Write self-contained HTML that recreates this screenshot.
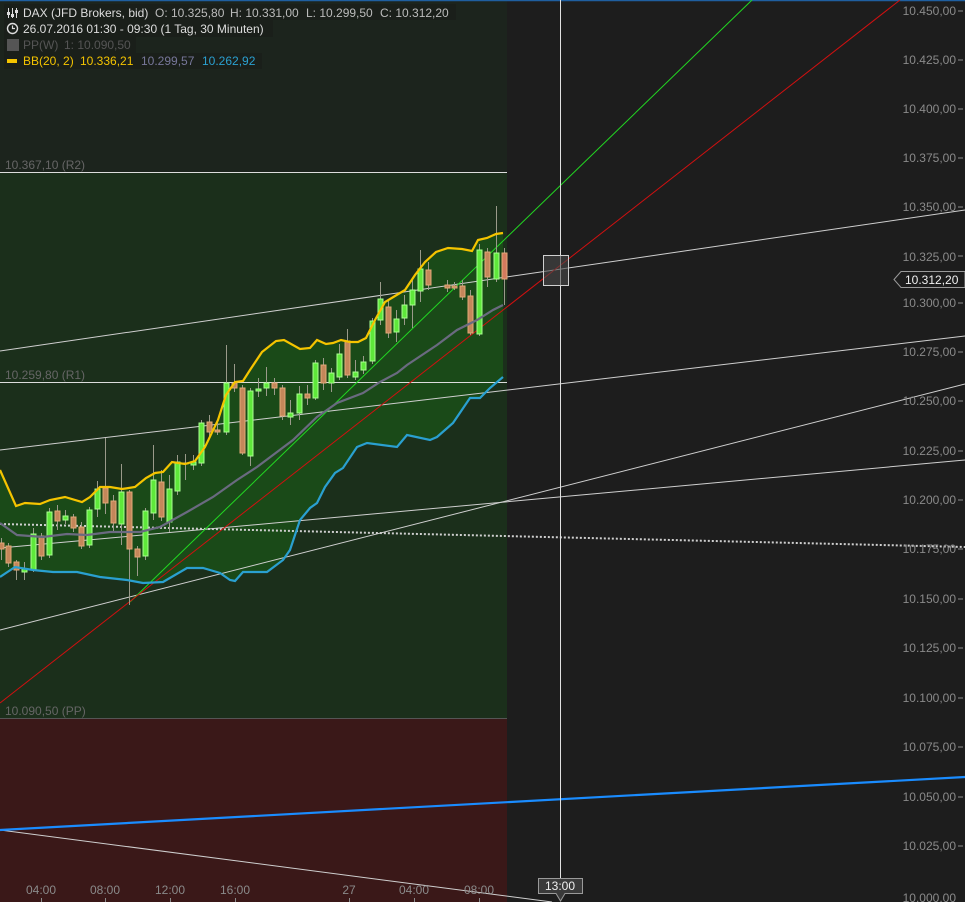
<!DOCTYPE html>
<html><head><meta charset="utf-8"><style>
html,body{margin:0;padding:0;background:#1d1d1d;}
svg{display:block;font-family:"Liberation Sans",sans-serif;}
text{white-space:pre;}
</style></head><body>
<svg width="965" height="902" xmlns="http://www.w3.org/2000/svg" xml:space="preserve">
<rect x="0" y="0" width="965" height="902" fill="#1d1d1d"/>
<rect x="0" y="0" width="507" height="172" fill="#1c241d"/>
<rect x="0" y="172" width="507" height="546" fill="#1b2f1b"/>
<rect x="0" y="718" width="507" height="184" fill="#3a1818"/>
<line x1="0" y1="0.5" x2="965" y2="0.5" stroke="#1f5fa0" stroke-width="1.5"/>
<polygon fill="#1a4a18" points="0,470 16,506 25,503 40,504 50,500 65,497 82,502 90,497 100,487 110,487 122,489 135,487 146,478 155,473 163,472 172,462 185,464 195,461 205,447 218,420 226,395 235,382 243,381 250,370 262,352 276,341 284,340 300,349 310,348 317,340 326,344 333,343 341,340 350,342 358,342 366,338 375,320 380,311 385,302 395,296 405,290 415,275 425,262 436,252 448,248 462,249 472,251 478,240 487,238 496,234 503,233 503,377 490,388 480,398 470,398 453,423 437,437 430,440 407,435 397,447 367,443 357,447 343,468 335,473 325,487 317,503 310,508 300,520 290,550 283,560 267,572 243,572 235,581 230,580 220,573 203,568 187,568 163,582 143,583 127,580 100,577 77,572 53,572 33,570 15,567 0,577"/>
<line x1="0" y1="172.5" x2="507" y2="172.5" stroke="#ddd" stroke-width="1"/>
<line x1="0" y1="382.5" x2="507" y2="382.5" stroke="#ddd" stroke-width="1"/>
<line x1="0" y1="718.5" x2="507" y2="718.5" stroke="#555" stroke-width="1"/>
<text x="5" y="169" font-size="12" fill="#666">10.367,10 (R2)</text>
<text x="5" y="379" font-size="12" fill="#666">10.259,80 (R1)</text>
<text x="5" y="715" font-size="12" fill="#666">10.090,50 (PP)</text>
<g stroke="#cfcfcf" stroke-width="1">
<line x1="0" y1="351" x2="965" y2="210"/>
<line x1="0" y1="450" x2="965" y2="336"/>
<line x1="0" y1="548" x2="965" y2="460"/>
<line x1="0" y1="630" x2="965" y2="384"/>
<line x1="0" y1="830" x2="552" y2="902"/>
</g>
<line x1="0" y1="524" x2="965" y2="547" stroke="#cfcfcf" stroke-width="2" stroke-dasharray="2,2"/>
<line x1="130" y1="602" x2="752" y2="0" stroke="#22d822" stroke-width="1"/>
<line x1="0" y1="703" x2="900" y2="0" stroke="#d01010" stroke-width="1"/>
<line x1="0" y1="830" x2="965" y2="777" stroke="#1a8cff" stroke-width="2.2"/>
<g stroke-width="1">
<g stroke="#9a9a8a">
<line x1="1.5" y1="538" x2="1.5" y2="560"/><line x1="8.5" y1="543" x2="8.5" y2="567"/><line x1="16.5" y1="560" x2="16.5" y2="580"/><line x1="24.5" y1="562" x2="24.5" y2="580"/><line x1="33.5" y1="528" x2="33.5" y2="572"/><line x1="41.5" y1="533" x2="41.5" y2="560"/><line x1="49.5" y1="508" x2="49.5" y2="558"/><line x1="57.5" y1="505" x2="57.5" y2="530"/><line x1="65.5" y1="510" x2="65.5" y2="524"/><line x1="73.5" y1="514" x2="73.5" y2="532"/><line x1="81.5" y1="522" x2="81.5" y2="549"/><line x1="89.5" y1="507" x2="89.5" y2="548"/><line x1="97.5" y1="481" x2="97.5" y2="517"/><line x1="105.5" y1="438" x2="105.5" y2="514"/><line x1="113.5" y1="495" x2="113.5" y2="532"/><line x1="121.5" y1="464" x2="121.5" y2="545"/><line x1="129.5" y1="490" x2="129.5" y2="605"/><line x1="137.5" y1="546" x2="137.5" y2="576"/><line x1="145.5" y1="508" x2="145.5" y2="560"/><line x1="153.5" y1="445" x2="153.5" y2="520"/><line x1="161.5" y1="470" x2="161.5" y2="521"/><line x1="169.5" y1="475" x2="169.5" y2="532"/><line x1="177.5" y1="455" x2="177.5" y2="495"/><line x1="185.5" y1="454" x2="185.5" y2="480"/><line x1="193.5" y1="455" x2="193.5" y2="470"/><line x1="201.5" y1="420" x2="201.5" y2="466"/><line x1="209.5" y1="415" x2="209.5" y2="437"/><line x1="217.5" y1="420" x2="217.5" y2="435"/><line x1="226.5" y1="345" x2="226.5" y2="435"/><line x1="234.5" y1="364" x2="234.5" y2="392"/><line x1="242.5" y1="385" x2="242.5" y2="455"/><line x1="250.5" y1="388" x2="250.5" y2="466"/><line x1="258.5" y1="378" x2="258.5" y2="397"/><line x1="266.5" y1="367" x2="266.5" y2="396"/><line x1="274.5" y1="378" x2="274.5" y2="395"/><line x1="282.5" y1="385" x2="282.5" y2="420"/><line x1="290.5" y1="400" x2="290.5" y2="425"/><line x1="299.5" y1="386" x2="299.5" y2="420"/><line x1="307.5" y1="385" x2="307.5" y2="405"/><line x1="315.5" y1="360" x2="315.5" y2="400"/><line x1="323.5" y1="358" x2="323.5" y2="390"/><line x1="331.5" y1="368" x2="331.5" y2="392"/><line x1="339.5" y1="344" x2="339.5" y2="380"/><line x1="347.5" y1="329" x2="347.5" y2="378"/><line x1="355.5" y1="360" x2="355.5" y2="380"/><line x1="363.5" y1="356" x2="363.5" y2="374"/><line x1="372.5" y1="318" x2="372.5" y2="364"/><line x1="380.5" y1="282" x2="380.5" y2="325"/><line x1="388.5" y1="300" x2="388.5" y2="338"/><line x1="396.5" y1="310" x2="396.5" y2="342"/><line x1="404.5" y1="295" x2="404.5" y2="325"/><line x1="412.5" y1="280" x2="412.5" y2="328"/><line x1="420.5" y1="250" x2="420.5" y2="302"/><line x1="428.5" y1="262" x2="428.5" y2="290"/><line x1="447.5" y1="280" x2="447.5" y2="292"/><line x1="454.5" y1="282" x2="454.5" y2="290"/><line x1="462.5" y1="280" x2="462.5" y2="300"/><line x1="470.5" y1="290" x2="470.5" y2="335"/><line x1="479.5" y1="244" x2="479.5" y2="336"/><line x1="487.5" y1="248" x2="487.5" y2="287"/><line x1="496.5" y1="206" x2="496.5" y2="282"/><line x1="504.5" y1="248" x2="504.5" y2="305"/>
</g>
<g fill="#c4875a" stroke="#e2a878">
<rect x="-1" y="543" width="5" height="6"/><rect x="6" y="546" width="5" height="17"/><rect x="14" y="562" width="5" height="8"/><rect x="39" y="536" width="5" height="20"/><rect x="55" y="511" width="5" height="10"/><rect x="71" y="517" width="5" height="11"/><rect x="79" y="527" width="5" height="19"/><rect x="103" y="488" width="5" height="15"/><rect x="111" y="501" width="5" height="22"/><rect x="127" y="492" width="5" height="57"/><rect x="135" y="549" width="5" height="8"/><rect x="159" y="482" width="5" height="35"/><rect x="183" y="463" width="5" height="1"/><rect x="207" y="422" width="5" height="10"/><rect x="215" y="430" width="5" height="2"/><rect x="232" y="383" width="5" height="5"/><rect x="240" y="388" width="5" height="65"/><rect x="272" y="383" width="5" height="5"/><rect x="280" y="388" width="5" height="28"/><rect x="305" y="394" width="5" height="4"/><rect x="321" y="365" width="5" height="18"/><rect x="345" y="341" width="5" height="34"/><rect x="386" y="307" width="5" height="26"/><rect x="426" y="270" width="5" height="15"/><rect x="445" y="285" width="5" height="3"/><rect x="452" y="286" width="5" height="2"/><rect x="460" y="286" width="5" height="11"/><rect x="468" y="296" width="5" height="37"/><rect x="485" y="252" width="5" height="25"/><rect x="502" y="253" width="5" height="26" fill="#d47a5e"/>
</g>
<g fill="#5ee83a" stroke="#a8ff90">
<rect x="22" y="569" width="5" height="3"/><rect x="31" y="534" width="5" height="36"/><rect x="47" y="512" width="5" height="43"/><rect x="63" y="516" width="5" height="4"/><rect x="87" y="510" width="5" height="35"/><rect x="95" y="489" width="5" height="20"/><rect x="119" y="492" width="5" height="32"/><rect x="143" y="511" width="5" height="45"/><rect x="151" y="480" width="5" height="33"/><rect x="167" y="489" width="5" height="33"/><rect x="175" y="462" width="5" height="29"/><rect x="191" y="462" width="5" height="3"/><rect x="199" y="423" width="5" height="40"/><rect x="224" y="383" width="5" height="49"/><rect x="248" y="391" width="5" height="65"/><rect x="256" y="389" width="5" height="2"/><rect x="264" y="383" width="5" height="5"/><rect x="288" y="413" width="5" height="4"/><rect x="297" y="394" width="5" height="19"/><rect x="313" y="363" width="5" height="35"/><rect x="329" y="373" width="5" height="10"/><rect x="337" y="354" width="5" height="23"/><rect x="353" y="372" width="5" height="5"/><rect x="361" y="362" width="5" height="8"/><rect x="370" y="321" width="5" height="40"/><rect x="378" y="299" width="5" height="21"/><rect x="394" y="319" width="5" height="13"/><rect x="402" y="305" width="5" height="13"/><rect x="410" y="290" width="5" height="15"/><rect x="418" y="269" width="5" height="22"/><rect x="477" y="250" width="5" height="84"/><rect x="494" y="253" width="5" height="26"/>
</g>
</g>
<polyline fill="none" stroke="#f5c400" stroke-width="2.2" points="0,470 16,506 25,503 40,504 50,500 65,497 82,502 90,497 100,487 110,487 122,489 135,487 146,478 155,473 163,472 172,462 185,464 195,461 205,447 218,420 226,395 235,382 243,381 250,370 262,352 276,341 284,340 300,349 310,348 317,340 326,344 333,343 341,340 350,342 358,342 366,338 375,320 380,311 385,302 395,296 405,290 415,275 425,262 436,252 448,248 462,249 472,251 478,240 487,238 496,234 503,233"/>
<polyline fill="none" stroke="#6a6a80" stroke-width="2.2" points="0,523 17,535 43,537 67,534 87,535 110,532 140,532 160,527 187,512 213,497 237,480 257,467 277,452 293,440 317,417 337,403 363,393 380,382 397,373 407,365 437,345 457,330 477,320 493,310 503,305"/>
<polyline fill="none" stroke="#2aa0d0" stroke-width="2.2" points="0,577 15,567 33,570 53,572 77,572 100,577 127,580 143,583 163,582 187,568 203,568 220,573 230,580 235,581 243,572 267,572 283,560 290,550 300,520 310,508 317,503 325,487 335,473 343,468 357,447 367,443 397,447 407,435 430,440 437,437 453,423 470,398 480,398 490,388 503,377"/>
<line x1="560.5" y1="0" x2="560.5" y2="880" stroke="#e0e0e0" stroke-width="1"/>
<rect x="543.5" y="255.5" width="25" height="30" fill="#4a4a4a" fill-opacity="0.6" stroke="#d0d0d0" stroke-width="1"/>
<g font-size="12" fill="#8a8a8a" text-anchor="end">
<text x="956" y="15">10.450,00</text><text x="956" y="64">10.425,00</text><text x="956" y="113">10.400,00</text><text x="956" y="162">10.375,00</text><text x="956" y="211">10.350,00</text><text x="956" y="261">10.325,00</text><text x="956" y="307">10.300,00</text><text x="956" y="356">10.275,00</text><text x="956" y="405">10.250,00</text><text x="956" y="455">10.225,00</text><text x="956" y="504">10.200,00</text><text x="956" y="553">10.175,00</text><text x="956" y="603">10.150,00</text><text x="956" y="652">10.125,00</text><text x="956" y="702">10.100,00</text><text x="956" y="751">10.075,00</text><text x="956" y="801">10.050,00</text><text x="956" y="850">10.025,00</text><text x="956" y="902">10.000,00</text>
</g>
<g stroke="#8a8a8a"><line x1="958" y1="11" x2="963" y2="11"/><line x1="958" y1="60" x2="963" y2="60"/><line x1="958" y1="109" x2="963" y2="109"/><line x1="958" y1="158" x2="963" y2="158"/><line x1="958" y1="207" x2="963" y2="207"/><line x1="958" y1="256" x2="963" y2="256"/><line x1="958" y1="303" x2="963" y2="303"/><line x1="958" y1="352" x2="963" y2="352"/><line x1="958" y1="401" x2="963" y2="401"/><line x1="958" y1="451" x2="963" y2="451"/><line x1="958" y1="500" x2="963" y2="500"/><line x1="958" y1="549" x2="963" y2="549"/><line x1="958" y1="599" x2="963" y2="599"/><line x1="958" y1="648" x2="963" y2="648"/><line x1="958" y1="698" x2="963" y2="698"/><line x1="958" y1="747" x2="963" y2="747"/><line x1="958" y1="797" x2="963" y2="797"/><line x1="958" y1="846" x2="963" y2="846"/></g>
<path d="M894,279.5 L901,271.5 L965,271.5 L965,287.5 L901,287.5 Z" fill="#1d1d1d" stroke="#9a9a9a"/>
<text x="905" y="284" font-size="12" fill="#f0f0f0">10.312,20</text>
<g font-size="12" fill="#8a8a8a" text-anchor="middle">
<text x="41" y="894">04:00</text><text x="105" y="894">08:00</text><text x="170" y="894">12:00</text><text x="235" y="894">16:00</text><text x="349" y="894">27</text><text x="414" y="894">04:00</text><text x="479" y="894">08:00</text>
</g>
<g stroke="#8a8a8a"><line x1="41.5" y1="898" x2="41.5" y2="902"/><line x1="105.5" y1="898" x2="105.5" y2="902"/><line x1="170.5" y1="898" x2="170.5" y2="902"/><line x1="235.5" y1="898" x2="235.5" y2="902"/><line x1="349.5" y1="898" x2="349.5" y2="902"/><line x1="414.5" y1="898" x2="414.5" y2="902"/><line x1="479.5" y1="898" x2="479.5" y2="902"/></g>
<path d="M538.5,878.5 H582.5 V893.5 H565 L560.5,901 L556,893.5 H538.5 Z" fill="#3a3a3a" stroke="#9a9a9a"/>
<text x="560" y="890" font-size="12" fill="#f0f0f0" text-anchor="middle">13:00</text>
<rect x="4" y="4" width="452" height="16" fill="#1a1f1a"/>
<rect x="4" y="20" width="269" height="17" fill="#1a1f1a"/>
<rect x="4" y="37" width="132" height="16" fill="#1a1f1a"/>
<rect x="4" y="53" width="258" height="16" fill="#1a1f1a"/>
<g stroke="#ddd" stroke-width="1"><line x1="8.5" y1="8" x2="8.5" y2="18"/><line x1="12.5" y1="8" x2="12.5" y2="18"/><line x1="16.5" y1="8" x2="16.5" y2="18"/></g>
<g fill="#ddd"><rect x="7" y="12" width="3" height="3"/><rect x="11" y="14" width="3" height="3"/><rect x="15" y="10" width="3" height="3"/></g>
<text x="23" y="17" font-size="12" fill="#ddd">DAX (JFD Brokers, bid)</text>
<text x="155" y="17" font-size="12" fill="#bbb">O: 10.325,80</text>
<text x="230" y="17" font-size="12" fill="#bbb">H: 10.331,00</text>
<text x="306" y="17" font-size="12" fill="#bbb">L: 10.299,50</text>
<text x="380" y="17" font-size="12" fill="#bbb">C: 10.312,20</text>
<circle cx="12.5" cy="28.5" r="5" fill="none" stroke="#ddd" stroke-width="1.4"/>
<path d="M12.5,25.5 V28.5 H15" fill="none" stroke="#ddd" stroke-width="1.2"/>
<text x="23" y="33" font-size="12" fill="#ddd">26.07.2016 01:30 - 09:30 (1 Tag, 30 Minuten)</text>
<rect x="7" y="39" width="12" height="12" fill="#555"/>
<text x="23" y="49" font-size="12" fill="#555">PP(W)</text>
<text x="64" y="49" font-size="12" fill="#555">1: 10.090,50</text>
<rect x="7" y="59" width="10" height="4" fill="#f5c400"/>
<text x="23" y="65" font-size="12" fill="#f5c400">BB(20, 2)</text>
<text x="80" y="65" font-size="12" fill="#f5c400">10.336,21</text>
<text x="141" y="65" font-size="12" fill="#77779a">10.299,57</text>
<text x="202" y="65" font-size="12" fill="#2aa0d0">10.262,92</text>
</svg>
</body></html>
